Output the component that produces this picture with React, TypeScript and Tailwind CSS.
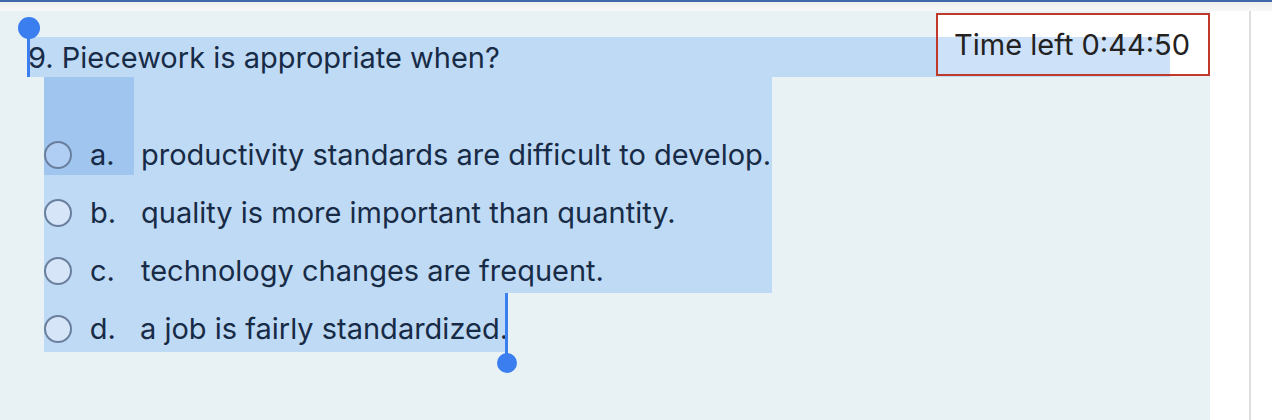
import React from "react";

const HL = "bg-[#bfdaf4]";

function Radio({ dark }: { dark?: boolean }) {
  return (
    <span
      className={`block w-[28px] h-[28px] rounded-full border-[2.5px] border-[#6a7f9e] ${
        dark ? "bg-[#b0cdf4]" : "bg-[#d6e5f8]"
      }`}
    />
  );
}

function Option({ letter, text, dark }: { letter: string; text: string; dark?: boolean }) {
  return (
    <div className="flex items-center h-[58px] leading-[58px]">
      <Radio dark={dark} />
      <span className="ml-[18px] w-[51px]">{letter}</span>
      <span className="whitespace-nowrap">{text}</span>
    </div>
  );
}

export default function App() {
  return (
    <div className="w-[1272px] h-[420px] bg-white overflow-hidden font-['Inter',sans-serif] text-[29px] text-[#172b47]">
      <div className="h-[2px] bg-[#4267a8]" />
      <div className="h-[9px] bg-gradient-to-b from-[#eeeeee] to-[#f8f8f8]" />
      <div className="flex h-[409px]">
        <div className="relative w-[1210px] h-full bg-[#e8f1f4]">
          {/* Question row */}
          <div className={`relative mt-[26px] ml-[28px] w-[1142px] h-[40px] ${HL}`}>
            <div className="leading-[42px] whitespace-nowrap">9. Piecework is appropriate when?</div>
            <span className="absolute left-[-1px] top-[-9px] w-[3px] h-[49px] bg-[#3a7ef0]" />
            <span className="absolute left-[-10px] top-[-20px] w-[22px] h-[22px] rounded-full bg-[#3a7ef0]" />
          </div>

          {/* Options a-c */}
          <div className={`relative ml-[44px] w-[728px] h-[216px] pt-[49px] ${HL}`}>
            <span className="absolute left-0 top-0 w-[90px] h-[98px] bg-[#a0c6f0]" />
            <div className="relative">
              <Option letter="a." text="productivity standards are difficult to develop." dark />
              <Option letter="b." text="quality is more important than quantity." />
              <Option letter="c." text="technology changes are frequent." />
            </div>
          </div>

          {/* Option d */}
          <div className={`relative ml-[44px] w-[464px] h-[59px] pt-[7px] ${HL}`}>
            <Option letter="d." text="a job is fairly standardized." />
            <span className="absolute left-[461px] top-0 w-[3px] h-[62px] bg-[#3a7ef0]" />
            <span className="absolute left-[453px] top-[60px] w-[20px] h-[20px] rounded-full bg-[#3a7ef0]" />
          </div>

          {/* Timer */}
          <div className="absolute right-0 top-[2px] w-[274px] h-[63px] border-2 border-[#c0392b] bg-white flex items-center">
            <span className="absolute left-0 top-[22px] w-[232px] bottom-0 bg-[#cde1f8]" />
            <span className="relative pl-[16px] text-[#222222] whitespace-nowrap">Time left 0:44:50</span>
          </div>
        </div>
        <div className="flex-1 h-full bg-white">
          <div className="ml-[39px] w-[2px] h-full bg-[#dedede]" />
        </div>
      </div>
    </div>
  );
}
